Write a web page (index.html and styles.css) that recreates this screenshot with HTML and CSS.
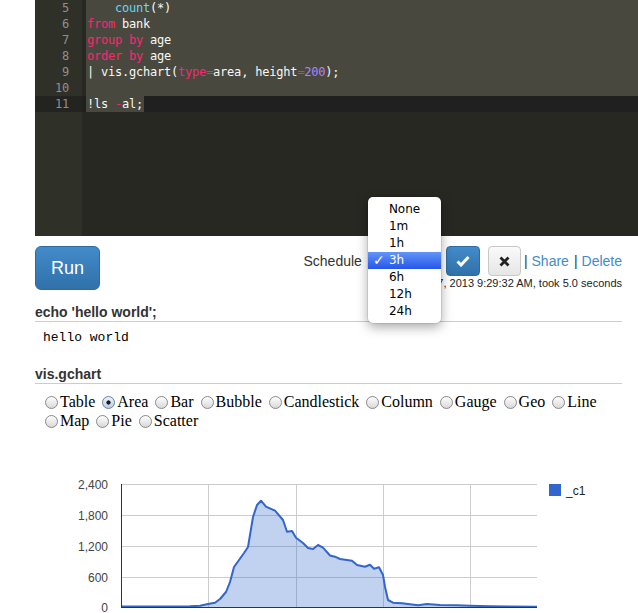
FILE: index.html
```
<!DOCTYPE html>
<html>
<head>
<meta charset="utf-8">
<link rel="stylesheet" href="styles.css">
</head>
<body>
<div class="page">
  <div class="editor">
    <div class="gutter">
      <div class="ln">5</div>
      <div class="ln">6</div>
      <div class="ln">7</div>
      <div class="ln">8</div>
      <div class="ln">9</div>
      <div class="ln">10</div>
      <div class="ln active">11</div>
    </div>
    <div class="code">
      <div class="line"><div class="selblock">    <span class="fn">count</span>(*)</div></div>
      <div class="line"><div class="selblock"><span class="kw">from</span> bank</div></div>
      <div class="line"><div class="selblock"><span class="kw">group</span> <span class="kw">by</span> age</div></div>
      <div class="line"><div class="selblock"><span class="kw">order</span> <span class="kw">by</span> age</div></div>
      <div class="line"><div class="selblock">| vis.gchart(<span class="kw">type</span><span class="kw">=</span>area, height<span class="kw">=</span><span class="num">200</span>);</div></div>
      <div class="line"><div class="selblock"> </div></div>
      <div class="line active"><span class="selspan">!ls <span class="kw">-</span>al;</span></div>
    </div>
  </div>

  <div class="toolbar">
    <button class="run">Run</button>
    <div class="side">
      <div class="controls">
        <span class="label">Schedule</span>
        <div class="selectwrap">
          <div class="menu">
            <div class="item">None</div>
            <div class="item">1m</div>
            <div class="item">1h</div>
            <div class="item current"><span class="check">✓</span>3h</div>
            <div class="item">6h</div>
            <div class="item">12h</div>
            <div class="item">24h</div>
          </div>
        </div>
        <button class="btn ok"><svg width="14" height="12" viewBox="0 0 14 12"><path d="M1.5 6.5 L5 10 L12.5 2" fill="none" stroke="#fff" stroke-width="3" stroke-linejoin="miter"/></svg></button>
        <button class="btn cancel"><svg width="11" height="11" viewBox="0 0 11 11"><path d="M1.5 1.5 L9.5 9.5 M9.5 1.5 L1.5 9.5" fill="none" stroke="#222" stroke-width="2.8"/></svg></button>
        <span class="sep first">|</span><a class="link">Share</a><span class="sep">|</span><a class="link">Delete</a>
      </div>
      <div class="stamp">Last run Nov 7, 2013 9:29:32 AM, took 5.0 seconds</div>
    </div>
  </div>

  <div class="section">
    <div class="heading">echo 'hello world';</div>
    <div class="output">hello world</div>
  </div>

  <div class="section second">
    <div class="heading">vis.gchart</div>
    <div class="radios">
      <label><input type="radio" name="t">Table</label>
      <label><input type="radio" name="t" checked>Area</label>
      <label><input type="radio" name="t">Bar</label>
      <label><input type="radio" name="t">Bubble</label>
      <label><input type="radio" name="t">Candlestick</label>
      <label><input type="radio" name="t">Column</label>
      <label><input type="radio" name="t">Gauge</label>
      <label><input type="radio" name="t">Geo</label>
      <label><input type="radio" name="t">Line</label>
      <label><input type="radio" name="t">Map</label>
      <label><input type="radio" name="t">Pie</label>
      <label><input type="radio" name="t">Scatter</label>
    </div>
    <svg class="chart" width="603" height="153" viewBox="0 0 603 153">
      <g transform="translate(-35,-460)">
        <g stroke="#cccccc" stroke-width="1">
          <line x1="121" y1="484.5" x2="537" y2="484.5"/>
          <line x1="121" y1="515.5" x2="537" y2="515.5"/>
          <line x1="121" y1="546.5" x2="537" y2="546.5"/>
          <line x1="121" y1="577.5" x2="537" y2="577.5"/>
          <line x1="208.5" y1="484" x2="208.5" y2="607"/>
          <line x1="296.5" y1="484" x2="296.5" y2="607"/>
          <line x1="383.5" y1="484" x2="383.5" y2="607"/>
          <line x1="470.5" y1="484" x2="470.5" y2="607"/>
        </g>
        <polygon fill="#3366cc" fill-opacity="0.3" points="121,607 121,606.5 190,606.3 200,605.7 208,604 215,602.7 220,599 226,592 230,582 234,567 239,560 244,553 248,547 253,517 257,505 261,500.7 266,506.7 275,510.7 283,520 287,531.7 292,531 296,537.7 303,543 308,548 313,549 318,545 323,547.7 330,555.5 335,556.7 340,559 352,560.7 357,565 365,566.7 370,564.7 374,568.7 379,567.3 383,575 385,586.7 388,600 393,602.7 402,603.3 418,605.3 427,604 440,605 457,605.3 470,605.7 490,606.3 537,606.7 537,607"/>
        <polyline fill="none" stroke="#3366cc" stroke-width="2" stroke-linejoin="round" points="121,606.5 190,606.3 200,605.7 208,604 215,602.7 220,599 226,592 230,582 234,567 239,560 244,553 248,547 253,517 257,505 261,500.7 266,506.7 275,510.7 283,520 287,531.7 292,531 296,537.7 303,543 308,548 313,549 318,545 323,547.7 330,555.5 335,556.7 340,559 352,560.7 357,565 365,566.7 370,564.7 374,568.7 379,567.3 383,575 385,586.7 388,600 393,602.7 402,603.3 418,605.3 427,604 440,605 457,605.3 470,605.7 490,606.3 537,606.7"/>
        <line x1="121.5" y1="484" x2="121.5" y2="607.5" stroke="#333" stroke-width="1"/>
        <line x1="121" y1="607.5" x2="537" y2="607.5" stroke="#333" stroke-width="1"/>
        <g class="axis" text-anchor="end">
          <text x="108" y="488.5">2,400</text>
          <text x="108" y="519.5">1,800</text>
          <text x="108" y="550.5">1,200</text>
          <text x="108" y="581.5">600</text>
          <text x="108" y="611.5">0</text>
        </g>
        <rect x="549" y="484" width="12" height="12" fill="#3366cc"/>
        <text class="legend" x="566" y="494.5">_c1</text>
      </g>
    </svg>
  </div>
</div>
</body>
</html>
```
FILE: styles.css
```
* { box-sizing: border-box; }
html, body { margin: 0; padding: 0; background: #fff; }
body { font-family: "Liberation Sans", Arial, sans-serif; color: #333; overflow: hidden; }
.page { padding: 0 16px 0 35px; width: 638px; }

.editor {
  display: flex;
  height: 236px;
  margin-right: -16px;
  background: #272822;
  font-family: "DejaVu Sans Mono", monospace;
  font-size: 12px;
  letter-spacing: -0.22px;
  line-height: 16px;
  color: #f8f8f2;
}
.gutter {
  width: 47px;
  flex: none;
  background: #2f3129;
  color: #8f908a;
  text-align: right;
}
.gutter .ln { padding-right: 13px; height: 16px; }
.gutter .ln.active { background: #232320; }
.code { flex: 1; }
.line { height: 16px; white-space: pre; }
.selblock { margin-left: 4px; padding-left: 1px; height: 16px; background: #49483e; white-space: pre; }
.line.active { background: #202020; }
.selspan { display: inline-block; margin-left: 4px; padding-left: 1px; padding-right: 1px; height: 16px; background: #49483e; }
.kw { color: #f92672; }
.fn { color: #66d9ef; }
.num { color: #ae81ff; }

.toolbar {
  display: flex;
  justify-content: space-between;
  align-items: flex-start;
  margin-top: 10px;
}
.run {
  width: 65px;
  height: 44px;
  border: 1px solid #2d6ca2;
  border-radius: 6px;
  background: linear-gradient(#428bca, #3071a9);
  color: #fff;
  font-family: "Liberation Sans", Arial, sans-serif;
  font-size: 18px;
  padding: 0;
}
.side { display: flex; flex-direction: column; align-items: flex-end; }
.controls { display: flex; align-items: center; height: 30px; font-size: 14px; }
.label { color: #333; margin-right: 6px; }
.selectwrap { position: relative; width: 73px; height: 30px; margin-right: 5px; }
.menu {
  position: absolute;
  left: 0;
  top: -49px;
  width: 73px;
  height: 126px;
  padding: 4px 0 3px;
  background: #fff;
  border-radius: 5px;
  box-shadow: 0 4px 12px rgba(0,0,0,0.35), 0 0 0 1px rgba(0,0,0,0.08);
  font-family: "DejaVu Sans", sans-serif;
  font-size: 12px;
  color: #000;
  z-index: 5;
}
.item { position: relative; height: 17px; line-height: 17px; padding-left: 21px; }
.item.current { background: linear-gradient(#6395f8, #2556ea); color: #fff; }
.check { position: absolute; left: 5px; top: 0; font-size: 14px; font-weight: bold; }
.btn {
  display: flex;
  align-items: center;
  justify-content: center;
  height: 30px;
  padding: 0;
  border-radius: 4px;
}
.btn.ok { width: 34px; background: linear-gradient(#428bca, #3071a9); border: 1px solid #2d6ca2; }
.btn.cancel { width: 33px; margin-left: 8px; background: linear-gradient(#fafafa, #e6e6e6); border: 1px solid #c8c8c8; }
.sep { color: #333; margin: 0 4px 0 5px; }
.sep.first { margin-left: 3px; }
.link { color: #428bca; }
.stamp { font-size: 11px; color: #222; line-height: 14px; margin-top: 0; }

.heading {
  margin-top: 13px;
  font-weight: bold;
  font-size: 14px;
  line-height: 18px;
  color: #333;
  border-bottom: 1px solid #cccccc;
}
.output {
  padding: 8px 0 0 8px;
  font-family: "Liberation Mono", "Courier New", monospace;
  font-size: 13px;
  line-height: 16px;
  color: #000;
}
.section.second .heading { margin-top: 19px; }
.radios {
  padding: 8px 0 0 7px;
  font-family: "Liberation Serif", "Times New Roman", serif;
  font-size: 16px;
  line-height: 19px;
  color: #000;
}
.radios label { white-space: nowrap; }
.radios input {
  -webkit-appearance: none;
  appearance: none;
  width: 13px;
  height: 13px;
  margin: 0 2px 0 3px;
  vertical-align: -2px;
  border: 1px solid #8a8a8a;
  border-radius: 50%;
  background: linear-gradient(#fefefe, #d8d8d8);
}
.radios input:checked {
  border-color: #6d7f99;
  background: radial-gradient(circle, #1a1a1a 0 1.8px, transparent 2.4px), linear-gradient(#eaf2fc, #b9cfe9);
}
.chart { display: block; margin-top: 30px; overflow: visible; }
.axis { font-family: "Liberation Sans", Arial, sans-serif; font-size: 12px; fill: #444; }
.legend { font-family: "Liberation Sans", Arial, sans-serif; font-size: 12px; fill: #222; }
```
